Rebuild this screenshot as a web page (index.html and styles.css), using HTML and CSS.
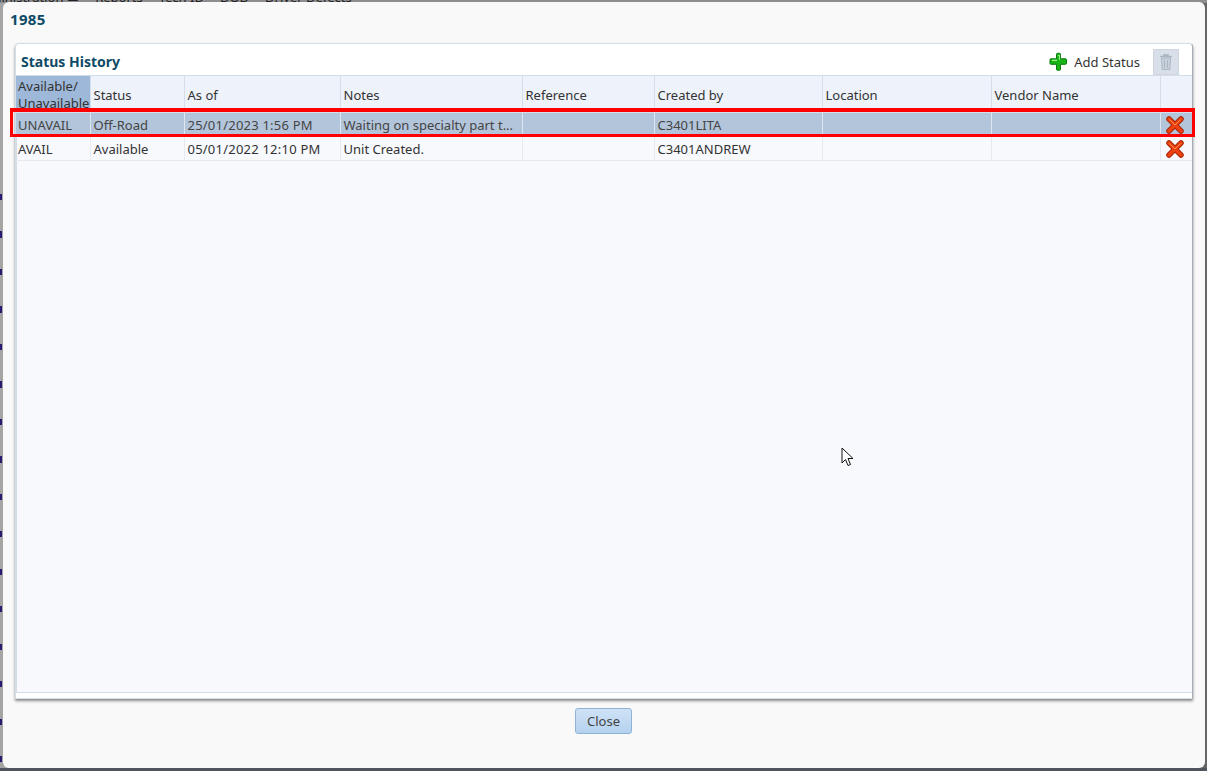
FILE: index.html
```html
<!DOCTYPE html>
<html lang="en">
<head>
<meta charset="utf-8">
<title>1985 - Status History</title>
<link rel="stylesheet" href="styles.css">
</head>
<body>
<div class="backdrop-nav"><span>Administration ▬</span><span>Reports</span><span>Tech ID</span><span>DOD</span><span>Driver Defects</span></div>
<div class="edge-marks"></div>
<div class="dialog">
  <div class="dialog-title">1985</div>
  <div class="panel">
    <div class="panel-head">
      <h2 class="panel-title">Status History</h2>
      <div class="tools">
        <button class="add-btn" type="button">
          <svg class="plus" width="20" height="20" viewBox="0 0 20 20"><path d="M8 2.500a1 1 0 0 1 1-1h2a1 1 0 0 1 1 1V7h5a1 1 0 0 1 1 1v3.500a1 1 0 0 1-1 1h-5V17.500a1 1 0 0 1-1 1H9a1 1 0 0 1-1-1v-5H2.500a1 1 0 0 1-1-1V8a1 1 0 0 1 1-1H8z" transform="translate(-.5 -.2)" fill="#17b317" stroke="#0a7a0a" stroke-width="1"/><path d="M9 3.500h1.500V8M3 8.300h5" fill="none" stroke="#9cf08c" stroke-width="1.200"/></svg>
          <span>Add Status</span>
        </button>
        <button class="trash-btn" type="button" aria-label="Delete">
          <svg width="14" height="18" viewBox="0 0 14 18"><path d="M1 3.500h12M5 3.500V2h4v1.500" fill="none" stroke="#a9b5c2" stroke-width="1.500"/><path d="M2.500 5h9l-.7 11.500H3.200z" fill="#c9d2dc" stroke="#a9b5c2"/><path d="M5.500 7v8M8.500 7v8" stroke="#aab6c3"/></svg>
        </button>
      </div>
    </div>
    <div class="table-wrap">
      <table class="grid">
        <colgroup>
          <col class="c1"><col class="c2"><col class="c3"><col class="c4"><col class="c5"><col class="c6"><col class="c7"><col class="c8"><col class="c9">
        </colgroup>
        <thead>
          <tr>
            <th class="sorted">Available/<br>Unavailable</th><th>Status</th><th>As of</th><th>Notes</th><th>Reference</th><th>Created by</th><th>Location</th><th>Vendor Name</th><th></th>
          </tr>
        </thead>
        <tbody>
          <tr class="selected">
            <td class="first">UNAVAIL</td><td>Off-Road</td><td class="date">25/01/2023 1:56 PM</td><td>Waiting on specialty part t...</td><td></td><td>C3401LITA</td><td></td><td></td>
            <td class="del"><svg class="x-icon" width="20" height="20" viewBox="0 0 20 20"><path d="M4 4l12 12M16 4 4 16" fill="none" stroke="#a92506" stroke-width="5.500" stroke-linecap="round"/><path d="M4 4l12 12M16 4 4 16" fill="none" stroke="#ee4310" stroke-width="3.500" stroke-linecap="round"/><path d="M4.500 4.500l5.500 5.500 5.500-5.500" fill="none" stroke="#ff8a50" stroke-width="1"/></svg></td>
          </tr>
          <tr>
            <td class="first">AVAIL</td><td>Available</td><td class="date">05/01/2022 12:10 PM</td><td>Unit Created.</td><td></td><td>C3401ANDREW</td><td></td><td></td>
            <td class="del"><svg class="x-icon" width="20" height="20" viewBox="0 0 20 20"><path d="M4 4l12 12M16 4 4 16" fill="none" stroke="#a92506" stroke-width="5.500" stroke-linecap="round"/><path d="M4 4l12 12M16 4 4 16" fill="none" stroke="#ee4310" stroke-width="3.500" stroke-linecap="round"/><path d="M4.500 4.500l5.500 5.500 5.500-5.500" fill="none" stroke="#ff8a50" stroke-width="1"/></svg></td>
          </tr>
        </tbody>
      </table>
    </div>
    <div class="panel-foot"></div>
  </div>
  <div class="actions"><button class="close-btn" type="button">Close</button></div>
</div>
<div class="highlight"></div>
<svg class="cursor" width="14" height="21" viewBox="0 0 14 21"><path d="M1 1v15l3.500-3.500 2.500 6 2.500-1-2.500-6H12z" fill="#fff" stroke="#111" stroke-width="1" stroke-linejoin="round"/></svg>
</body>
</html>
```
FILE: styles.css
```css
* { box-sizing: border-box; }
html, body { height: 100%; }
body {
  margin: 0;
  height: 771px;
  overflow: hidden;
  padding: 2px 2px 3px 3px;
  background:
    linear-gradient(#4f565e, #4f565e) left bottom / 100% 3px no-repeat,
    linear-gradient(#8e8e90, #8e8e90) left top / 100% 3px no-repeat,
    linear-gradient(90deg, #a5a5a5 50%, #666 50%);
  font-family: "Noto Sans", "DejaVu Sans", sans-serif;
  font-size: 13px;
  color: #333;
  position: relative;
}
.backdrop-nav {
  position: absolute;
  top: -12px;
  left: -27px;
  display: flex;
  gap: 16px;
  font-size: 13px;
  color: #222;
  white-space: nowrap;
}
.edge-marks {
  position: absolute;
  left: 0;
  top: 180px;
  width: 2px;
  height: 591px;
  background: repeating-linear-gradient(180deg, transparent 0 14px, #2a1a70 14px 20px, transparent 20px 37.500px);
}
.dialog {
  height: 766px;
  width: 1202px;
  background: #f9f9f9;
  border-radius: 6px;
  display: flex;
  flex-direction: column;
  padding: 0 12px 0 12px;
  position: relative;
}
.dialog-title {
  height: 41px;
  padding-top: 8px;
  margin-left: -5px;
  font-size: 15px;
  letter-spacing: .3px;
  font-weight: 700;
  line-height: 18px;
  color: #0f4a66;
}
.panel {
  height: 656px;
  width: 1178px;
  background: #fff;
  border: 1px solid #d3dde6;
  border-right-color: #a3aab2;
  border-radius: 4px 4px 0 0;
  box-shadow: 0 2px 3px rgba(0, 0, 0, .45);
  display: flex;
  flex-direction: column;
}
.panel-head {
  height: 31px;
  flex: none;
  display: flex;
  align-items: center;
  justify-content: space-between;
  padding: 4px 13px 0 5px;
}
.panel-title {
  margin: 0;
  font-size: 14px;
  font-weight: 700;
  color: #0f4a66;
}
.tools { display: flex; align-items: center; gap: 13px; }
.add-btn {
  display: flex;
  align-items: center;
  gap: 5px;
  border: 0;
  padding: 0;
  background: none;
  font: inherit;
  color: #333;
}
.trash-btn {
  width: 26px;
  height: 26px;
  padding: 0;
  border: 1px solid #cfd6df;
  background: #d8dfe8;
  display: flex;
  align-items: center;
  justify-content: center;
}
.table-wrap {
  flex: 1;
  background: #f7f9fd;
  box-shadow: inset 1px 0 0 #d3dde6;
  border-top: 1px solid #d3dde6;
  border-bottom: 1px solid #d3dde6;
  overflow: hidden;
}
.grid {
  table-layout: fixed;
  border-collapse: collapse;
  width: 1176px;
}
.c1 { width: 74px; }
.c2 { width: 94px; }
.c3 { width: 156px; }
.c4 { width: 182px; }
.c5 { width: 132px; }
.c6 { width: 168px; }
.c7 { width: 169px; }
.c8 { width: 169px; }
.c9 { width: 32px; }
.grid th {
  height: 36px;
  padding: 2px 0 0 3px;
  text-align: left;
  font-weight: 400;
  line-height: 17px;
  white-space: nowrap;
  color: #333;
  background: #eef2fa;
  border-right: 1px solid #d6deea;
  border-bottom: 1px solid #d6deea;
}
.grid th.sorted { background: #9db8d8; padding-left: 2px; }
.grid td {
  height: 24px;
  padding: 1px 2px 0 3px;
  line-height: 18px;
  white-space: nowrap;
  overflow: hidden;
  border-right: 1px solid #e6e9ef;
  border-bottom: 1px solid #e6e9ef;
}
.grid td.first { padding-left: 2px; }
.grid td.date { letter-spacing: .22px; }
.selected td { background: #b3c5da; color: #444; border-right-color: #dfe6ef; }
.grid td.del { padding: 1px 0 0 4px; line-height: 0; }
.x-icon { display: block; }
.panel-foot { height: 5px; flex: none; background: #fff; }
.actions {
  flex: 1;
  display: flex;
  justify-content: center;
  align-items: flex-start;
  padding: 9px 1px 0 0;
}
.close-btn {
  width: 57px;
  height: 26px;
  border: 1px solid #8fb3d6;
  border-radius: 3px;
  background: linear-gradient(#cfe2f6, #b4d2ef);
  font: inherit;
  color: #444;
}
.highlight {
  position: absolute;
  left: 10px;
  top: 108px;
  width: 1185px;
  height: 29px;
  border: 3px solid #f00;
  border-top-width: 4px;
}
.cursor { position: absolute; left: 841px; top: 447px; }
```
